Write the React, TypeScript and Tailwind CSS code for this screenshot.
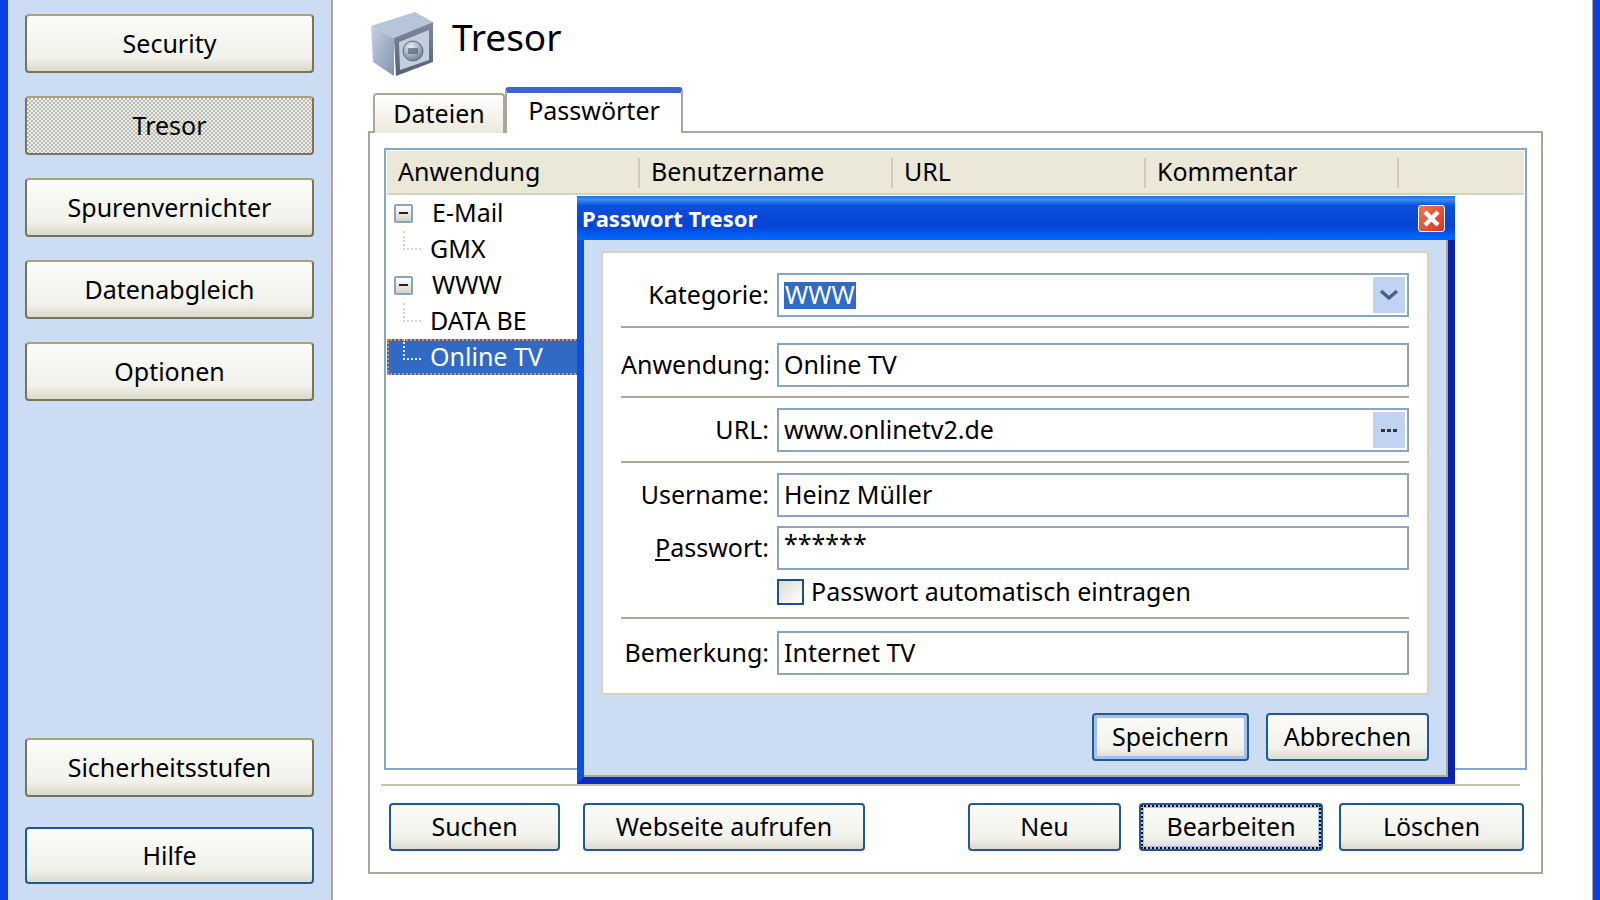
import * as React from "react";

const btnBase =
  "flex items-center justify-center rounded-[4px] text-[25px] text-black bg-[linear-gradient(#fbfbf8,#f2f2ec_75%,#dcd9cc)]";
const olive = "border-2 border-[#77745c] border-t-[#a8a27c]";
const blue = "border-2 border-[#1f5a92]";

function SideButton({ label, active, className }: { label: string; active?: boolean; className?: string }) {
  return (
    <button
      className={`${btnBase} w-[289px] h-[59px] ${olive} ${
        active
          ? "bg-[repeating-conic-gradient(#b9b9b4_0_25%,#f0f0ec_0_50%)] bg-[length:4px_4px]"
          : ""
      } ${className ?? ""}`}
    >
      {label}
    </button>
  );
}

function Minus() {
  return (
    <span className="flex items-center justify-center w-[19px] h-[19px] rounded-[2px] border-2 border-[#8aa5c4] bg-[linear-gradient(#ffffff,#d6d3c6)]">
      <span className="w-[9px] h-[2px] bg-[#222]" />
    </span>
  );
}

function TreeParent({ label }: { label: string }) {
  return (
    <div className="flex items-center h-[36px] pl-[7px]">
      <Minus />
      <span className="ml-[19px]">{label}</span>
    </div>
  );
}

function TreeChild({ label, selected, tall }: { label: string; selected?: boolean; tall?: boolean }) {
  return (
    <div
      className={`flex items-start h-[36px] pl-[16px] w-[260px] ${
        selected ? "bg-[#316ac5] text-white outline-2 outline-dotted outline-[#e58a5a] -outline-offset-2" : ""
      }`}
    >
      <span
        className={`w-[18px] border-l-2 border-b-2 border-dotted ${
          selected ? "h-[21px] border-[#e8eefa]" : "h-[19px] border-[#d8d6c0]"
        } ${tall ? "" : ""}`}
      />
      <span className="ml-[9px] self-center">{label}</span>
    </div>
  );
}

function Sep() {
  return <div className="h-[2px] bg-[#aca899]" />;
}

function Field({ label, className, children }: { label: React.ReactNode; className?: string; children?: React.ReactNode }) {
  return (
    <div className={`flex items-stretch h-[44px] ${className ?? ""}`}>
      <span className="w-[148px] text-right self-center whitespace-nowrap">{label}</span>
      <div className="ml-[8px] flex-1 flex items-center border-2 border-[#8aa5c4] pl-[5px] pr-[2px] bg-white">
        {children}
      </div>
    </div>
  );
}

function SafeIcon() {
  return (
    <svg width="66" height="66" viewBox="0 0 66 66">
      <defs>
        <linearGradient id="sl" x1="0" y1="0" x2="1" y2="1">
          <stop offset="0" stopColor="#c4d2e4" />
          <stop offset="1" stopColor="#8092ad" />
        </linearGradient>
        <linearGradient id="sf" x1="0" y1="0" x2="0" y2="1">
          <stop offset="0" stopColor="#7e8aa0" />
          <stop offset="1" stopColor="#555f72" />
        </linearGradient>
        <radialGradient id="sd" cx="0.4" cy="0.3" r="0.7">
          <stop offset="0" stopColor="#eef2f6" />
          <stop offset="1" stopColor="#6f8199" />
        </radialGradient>
      </defs>
      <path d="M2 16 L25 28 L25 66 L4 52 Z" fill="url(#sl)" />
      <path d="M2 16 L46 2 L64 12 L25 28 Z" fill="#b6c5da" />
      <path d="M25 28 L64 12 L64 52 L27 66 Z" fill="url(#sf)" />
      <path d="M30 32 L60 20 L60 50 L31 60 Z" fill="#c3cfdc" />
      <circle cx="44" cy="41" r="10" fill="url(#sd)" stroke="#5d6b80" strokeWidth="1" />
      <rect x="39" y="38" width="10" height="6" rx="1" fill="#4f6076" opacity="0.7" />
    </svg>
  );
}

function Dialog() {
  return (
    <div className="absolute left-[577px] top-[196px] w-[878px] h-[588px] flex flex-col bg-[#0b4fe3] border-r-[7px] border-r-[#0a22ab] border-b-[7px] border-b-[#0a2cc0] border-l-[7px] border-l-[#0b4fe3] text-[25px] text-black">
      <div className="h-[44px] shrink-0 -mx-[7px] flex items-center justify-between pl-[5px] pr-[10px] bg-[linear-gradient(#1f6ee8,#3a8cf5_8%,#0a50dc_22%,#0644d4_70%,#0066ff_95%)]">
        <span className="text-white font-bold text-[22px]">Passwort Tresor</span>
        <span className="flex items-center justify-center w-[27px] h-[27px] rounded-[3px] border border-white bg-[linear-gradient(135deg,#e67a50,#e2301c)]">
          <svg width="19" height="19" viewBox="0 0 19 19">
            <path d="M3 3 L16 16 M16 3 L3 16" stroke="#fff" strokeWidth="4.5" />
          </svg>
        </span>
      </div>
      <div className="flex-1 flex flex-col bg-[#ccdcf2] border-r-2 border-b-2 border-[#aca899] px-[17px] pt-[11px]">
        <div className="h-[444px] shrink-0 bg-white border-2 border-[#d6d2c2] rounded-[3px] pl-[18px] pr-[18px] pt-[20px]">
          <Field label="Kategorie:">
            <span className="bg-[#316ac5] text-white h-[27px] flex items-center px-[1px]">WWW</span>
            <span className="ml-auto flex items-center justify-center w-[32px] h-[36px] bg-[#c1d3f3]">
              <svg width="20" height="12" viewBox="0 0 20 12">
                <path d="M2 2 L10 9 L18 2" fill="none" stroke="#4d6185" strokeWidth="3.5" />
              </svg>
            </span>
          </Field>
          <div className="mt-[9px]"><Sep /></div>
          <Field label="Anwendung:" className="mt-[15px]">Online TV</Field>
          <div className="mt-[9px]"><Sep /></div>
          <Field label="URL:" className="mt-[10px]">
            www.onlinetv2.de
            <span className="ml-auto flex items-center justify-center gap-[2px] w-[32px] h-[36px] bg-[#c1d3f3]">
              <span className="w-[4px] h-[3px] bg-[#333]" />
              <span className="w-[4px] h-[3px] bg-[#333]" />
              <span className="w-[4px] h-[3px] bg-[#333]" />
            </span>
          </Field>
          <div className="mt-[9px]"><Sep /></div>
          <Field label="Username:" className="mt-[10px]">Heinz Müller</Field>
          <Field label={<><span className="underline">P</span>asswort:</>} className="mt-[9px]">
            <span className="-mt-[8px]">******</span>
          </Field>
          <div className="flex items-center h-[26px] mt-[9px] pl-[156px]">
            <span className="w-[27px] h-[26px] border-2 border-[#1c5180] bg-[linear-gradient(135deg,#dcdcd2,#ffffff)]" />
            <span className="ml-[7px]">Passwort automatisch eintragen</span>
          </div>
          <div className="mt-[12px]"><Sep /></div>
          <Field label="Bemerkung:" className="mt-[12px]">Internet TV</Field>
        </div>
        <div className="flex justify-end gap-[17px] mt-[18px]">
          <button className={`${btnBase} ${blue} w-[157px] h-[48px] shadow-[inset_0_0_0_3px_#a5c0ec]`}>Speichern</button>
          <button className={`${btnBase} ${blue} w-[163px] h-[48px]`}>Abbrechen</button>
        </div>
      </div>
    </div>
  );
}

export default function App() {
  return (
    <div className="relative flex w-[1600px] h-[900px] overflow-hidden bg-white font-['Noto_Sans',sans-serif] text-[25px] text-black">
      <div className="w-[8px] shrink-0 bg-[#0b3fe0]" />
      <div className="w-[323px] shrink-0 flex flex-col pl-[17px] pt-[14px] pb-[16px] bg-[#ccdcf2]">
        <div className="flex flex-col gap-[23px]">
          <SideButton label="Security" />
          <SideButton label="Tresor" active />
          <SideButton label="Spurenvernichter" />
          <SideButton label="Datenabgleich" />
          <SideButton label="Optionen" />
        </div>
        <SideButton label="Sicherheitsstufen" className="mt-auto" />
        <button className={`${btnBase} ${blue} w-[289px] h-[57px] mt-[30px]`}>Hilfe</button>
      </div>
      <div className="w-[2px] shrink-0 bg-[#aca899]" />

      <div className="flex-1 flex flex-col pl-[35px] pr-[47px]">
        <div className="flex items-start h-[87px] shrink-0 pt-[10px] pl-[1px]">
          <SafeIcon />
          <span className="ml-[17px] -mt-[1px] text-[37px]">Tresor</span>
        </div>
        <div className="flex items-end h-[46px] shrink-0 pl-[5px] -mb-[2px] relative">
          <div className="flex items-center justify-center w-[132px] h-[40px] border-2 border-b-0 border-[#aca899] rounded-t-[4px] bg-[linear-gradient(#ffffff,#ece9dc)]">
            Dateien
          </div>
          <div className="flex items-center justify-center w-[178px] h-[46px] pb-[4px] border-2 border-b-0 border-[#aca899] border-t-[6px] border-t-[#3b68c4] rounded-t-[4px] bg-white">
            Passwörter
          </div>
        </div>
        <div className="w-[1175px] h-[743px] shrink-0 border-2 border-[#aca899] bg-white pl-[14px] pt-[15px]">
          <div className="w-[1143px] h-[622px] border-2 border-[#8aa5c4] p-[1px]">
            <div className="flex h-[44px] bg-[#ebe8d8] border-b-2 border-[#d6d2c2]">
              {["Anwendung", "Benutzername", "URL", "Kommentar"].map((h) => (
                <div key={h} className="w-[253px] pl-[11px] flex items-center relative">
                  {h}
                  <span className="absolute right-0 top-[7px] bottom-[5px] w-[2px] bg-[#cfcbb8]" />
                </div>
              ))}
            </div>
            <TreeParent label="E-Mail" />
            <TreeChild label="GMX" />
            <TreeParent label="WWW" />
            <TreeChild label="DATA BE" />
            <TreeChild label="Online TV" selected />
          </div>
          <div className="w-[1139px] h-[2px] -ml-[3px] mt-[14px] bg-[#c5c2b2]" />
          <div className="flex mt-[17px] -ml-[3px] w-[1135px] ml-[5px]">
            <button className={`${btnBase} ${blue} w-[171px] h-[48px]`}>Suchen</button>
            <button className={`${btnBase} ${blue} w-[282px] h-[48px] ml-[23px]`}>Webseite aufrufen</button>
            <button className={`${btnBase} ${blue} w-[153px] h-[48px] ml-auto`}>Neu</button>
            <button className={`${btnBase} ${blue} w-[184px] h-[48px] ml-[18px] shadow-[inset_0_0_0_3px_#a5c0ec] outline-2 outline-dotted outline-black -outline-offset-4`}>Bearbeiten</button>
            <button className={`${btnBase} ${blue} w-[185px] h-[48px] ml-[16px]`}>Löschen</button>
          </div>
        </div>
      </div>
      <div className="w-[8px] shrink-0 bg-[#0b3fe0] border-l border-[#aca899]" />
      <Dialog />
    </div>
  );
}
